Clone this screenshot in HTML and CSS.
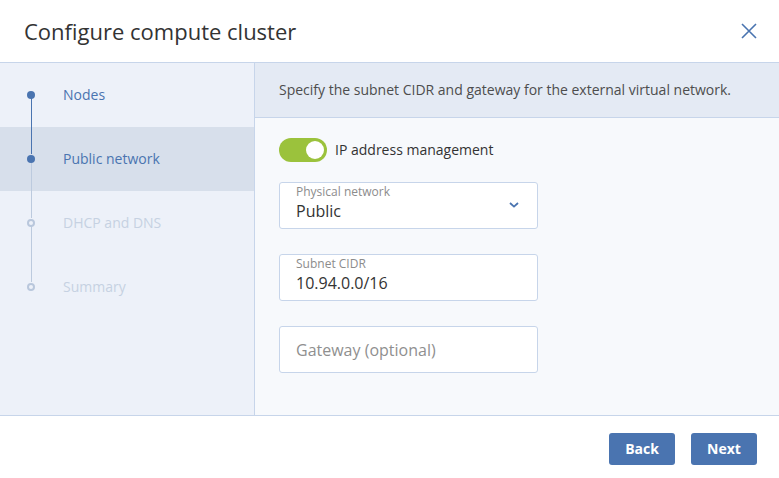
FILE: index.html
```html
<!DOCTYPE html>
<html>
<head>
<meta charset="utf-8">
<link rel="stylesheet" href="styles.css">
</head>
<body>
<div class="dialog">
  <header class="header">
    <h1 class="title">Configure compute cluster</h1>
    <button class="close" aria-label="Close">
      <svg width="16" height="16" viewBox="0 0 16 16"><path d="M1 1 L15 15 M15 1 L1 15" stroke="#4a74b0" stroke-width="1.6" fill="none"/></svg>
    </button>
  </header>
  <div class="main">
    <nav class="steps">
      <div class="step done first">
        <span class="marker"><span class="line-down dark"></span><span class="dot"></span></span>
        <span class="label">Nodes</span>
      </div>
      <div class="step done active">
        <span class="marker"><span class="line-up dark"></span><span class="line-down"></span><span class="dot"></span></span>
        <span class="label">Public network</span>
      </div>
      <div class="step todo">
        <span class="marker"><span class="line-up"></span><span class="line-down"></span><span class="dot"></span></span>
        <span class="label">DHCP and DNS</span>
      </div>
      <div class="step todo last">
        <span class="marker"><span class="line-up"></span><span class="dot"></span></span>
        <span class="label">Summary</span>
      </div>
    </nav>
    <section class="panel">
      <div class="info">Specify the subnet CIDR and gateway for the external virtual network.</div>
      <div class="form">
        <div class="toggle-row">
          <span class="toggle"><span class="knob"></span></span>
          <span class="toggle-label">IP address management</span>
        </div>
        <div class="field select">
          <div class="field-text">
            <span class="field-label">Physical network</span>
            <span class="field-value">Public</span>
          </div>
          <svg class="chevron" width="10" height="6" viewBox="0 0 10 6"><path d="M1 1 L5 4.6 L9 1" stroke="#4a74b0" stroke-width="1.8" fill="none"/></svg>
        </div>
        <div class="field">
          <div class="field-text">
            <span class="field-label">Subnet CIDR</span>
            <span class="field-value">10.94.0.0/16</span>
          </div>
        </div>
        <div class="field empty">
          <span class="placeholder">Gateway (optional)</span>
        </div>
      </div>
    </section>
  </div>
  <footer class="footer">
    <button class="btn">Back</button>
    <button class="btn">Next</button>
  </footer>
</div>
</body>
</html>
```
FILE: styles.css
```css
* { box-sizing: border-box; }
html, body { margin: 0; padding: 0; }
body {
  font-family: "Open Sans", "Noto Sans", sans-serif;
  background: #ffffff;
  width: 779px;
  height: 478px;
  overflow: hidden;
}
.dialog { display: flex; flex-direction: column; height: 478px; }
.header {
  height: 63px;
  border-bottom: 1px solid #c7d5ea;
  display: flex;
  align-items: center;
  justify-content: space-between;
  padding: 0 22px 0 24px;
}
.title {
  margin: 0;
  font-weight: 400;
  font-size: 22px;
  color: #333333;
  letter-spacing: 0;
}
.close {
  border: 0; background: none; padding: 0; width: 16px; height: 16px;
  display: flex;
}
.main {
  height: 353px;
  display: flex;
  border-bottom: 1px solid #c7d5ea;
}
.steps {
  width: 255px;
  background: #edf1f9;
  border-right: 1px solid #c7d5ea;
  display: flex;
  flex-direction: column;
}
.step {
  height: 64px;
  display: flex;
  align-items: center;
}
.step.active { background: #d7dfeb; }
.marker {
  position: relative;
  width: 63px;
  height: 64px;
  display: flex;
  align-items: center;
}
.dot {
  position: relative;
  margin-left: 27px;
  margin-top: -1px;
  width: 8px;
  height: 8px;
  border-radius: 50%;
  background: #4a74b0;
}
.todo .dot {
  background: transparent;
  border: 2px solid #b9c7dc;
}
.line-up, .line-down {
  position: absolute;
  left: 31px;
  width: 1px;
  background: #bccade;
}
.line-up { top: 0; height: 27px; }
.line-down { top: 35px; height: 29px; }
.line-up.dark, .line-down.dark { background: #4a74b0; }
.label { font-size: 14px; color: #4a74b0; margin-top: -2px; }
.todo .label { color: #c6d1e2; }
.panel {
  flex: 1;
  background: #f7f9fc;
  display: flex;
  flex-direction: column;
}
.info {
  height: 55px;
  background: #e4eaf4;
  border-bottom: 1px solid #c7d5ea;
  padding: 0 24px 2px 24px;
  display: flex;
  align-items: center;
  font-size: 14px;
  color: #4d4d4d;
}
.form {
  padding: 20px 24px 0 24px;
  display: flex;
  flex-direction: column;
}
.toggle-row {
  display: flex;
  align-items: center;
  gap: 8px;
  height: 24px;
  margin-bottom: 20px;
}
.toggle {
  width: 48px;
  height: 24px;
  border-radius: 12px;
  background: #9bc23c;
  display: flex;
  align-items: center;
  justify-content: flex-end;
  padding-right: 3px;
}
.knob {
  width: 18px; height: 18px; border-radius: 50%; background: #ffffff;
}
.toggle-label { font-size: 14px; color: #333333; margin-top: -2px; }
.field {
  width: 259px;
  height: 47px;
  background: #ffffff;
  border: 1px solid #c7d5ea;
  border-radius: 3px;
  padding: 0 16px 0 16px;
  display: flex;
  align-items: center;
  margin-bottom: 25px;
}
.field-text { display: flex; flex-direction: column; flex: 1; }
.field-label { font-size: 12px; color: #8c8c8c; line-height: 15px; margin-top: -5px; }
.field-value { font-size: 16px; color: #333333; line-height: 22px; margin-top: 1px; }
.select { justify-content: space-between; padding-right: 18px; }
.chevron { margin-top: -2px; }
.placeholder { font-size: 16px; color: #8f8f8f; }
.footer {
  flex: 1;
  display: flex;
  justify-content: flex-end;
  align-items: center;
  gap: 16px;
  padding: 3px 22px 0 0;
}
.btn {
  width: 66px;
  height: 32px;
  border: 0;
  border-radius: 3px;
  background: #4a74b0;
  color: #ffffff;
  font-family: "Open Sans", "Noto Sans", sans-serif;
  font-weight: 700;
  font-size: 14px;
  padding: 0;
}
```
